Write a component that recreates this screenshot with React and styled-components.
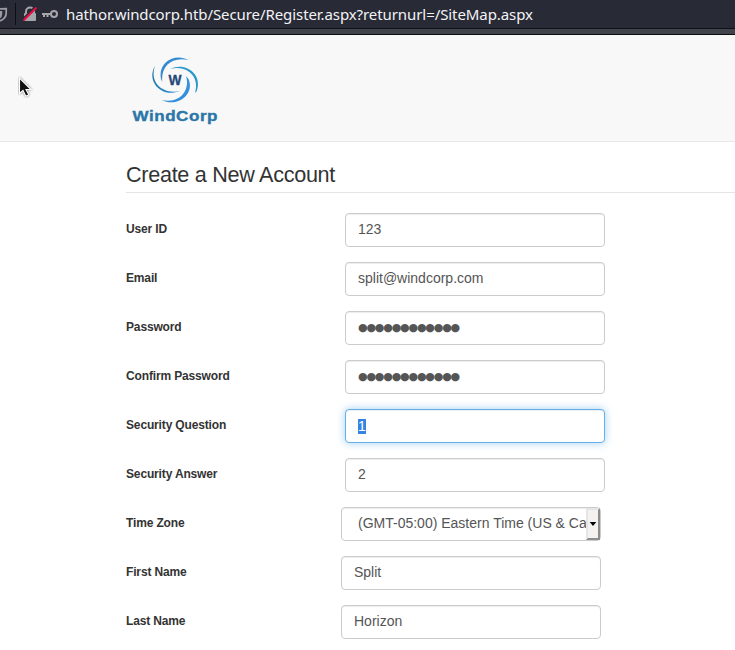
import React from "react";
import styled, { createGlobalStyle, css } from "styled-components";

const GlobalStyle = createGlobalStyle`
  *, *::before, *::after { box-sizing: border-box; }
  body {
    margin: 0;
    background: #fff;
    color: #333;
    font-family: "Liberation Sans", Arial, sans-serif;
    overflow: hidden;
  }
`;

const Page = styled.div`
  position: relative;
  width: 735px;
  height: 650px;
  overflow: hidden;
`;

const AddressBar = styled.div`
  display: flex;
  align-items: flex-start;
  height: 29px;
  background: #282a36;
  border-bottom: 1px solid #101116;
`;

const BarIcons = styled.svg`
  display: block;
  flex: none;
  width: 66px;
  height: 28px;
`;

const Url = styled.span`
  font: 15px/28px "Noto Sans", sans-serif;
  color: #f3f3f5;
  letter-spacing: -0.083px;
  white-space: nowrap;
`;

const Toolbar = styled.div`
  height: 6px;
  background: #42444d;
  border-bottom: 1px solid #0d0d10;
`;

const Header = styled.header`
  height: 107px;
  padding: 20px 0 0 131px;
  background: #f8f8f8;
  border-bottom: 1px solid #e7e7e7;
`;

const Brand = styled.svg`
  display: block;
  width: 90px;
  height: 74px;
`;

const Cursor = styled.svg`
  position: absolute;
  left: 18px;
  top: 76px;
  width: 16px;
  height: 23px;
`;

const CursorArrow = styled.path`
  fill: #111;
  stroke: #fff;
  stroke-width: 1.1;
  filter: drop-shadow(0 0 1px #777);
`;

const Main = styled.main`
  padding-left: 126px;
`;

const Title = styled.h1`
  margin: 0 0 20px;
  height: 51px;
  padding-top: 20px;
  border-bottom: 1px solid #e5e5e5;
  font-size: 21.6px;
  letter-spacing: -0.29px;
  line-height: 25px;
  font-weight: 400;
  white-space: nowrap;
`;

const Row = styled.div`
  display: flex;
  height: 34px;
  margin-bottom: 15px;
`;

const Label = styled.div`
  flex: none;
  width: ${(p) => (p.$narrow ? 215 : 219)}px;
  padding-top: 8px;
  font-size: 12px;
  letter-spacing: -0.15px;
  line-height: 16px;
  font-weight: 700;
`;

const Field = styled.div`
  display: flex;
  width: 260px;
  height: 34px;
  padding: 5px 12px;
  border: 1px solid #ccc;
  border-radius: 4px;
  background: #fff;
  color: #555;
  font-size: 14px;
  line-height: 20px;
  white-space: nowrap;
  box-shadow: inset 0 1px 1px rgba(0, 0, 0, 0.075);
  ${(p) => p.$focused && css`
    border-color: #66afe9;
    box-shadow: inset 0 1px 1px rgba(0, 0, 0, 0.075), 0 0 8px rgba(102, 175, 233, 0.6);
  `}
`;

const SelectField = styled(Field)`
  padding: 0;
`;

const SelectValue = styled.div`
  flex: 1;
  min-width: 0;
  padding: 5px 0 5px 16px;
`;

const SelectArrow = styled.div`
  display: flex;
  align-items: center;
  justify-content: center;
  flex: none;
  width: 14px;
  height: 32px;
  background: #f3f2f1;
  border: 2px solid;
  border-color: #e5e5e5 #8d8d8d #8d8d8d #e5e5e5;
`;

const Dots = styled.span`
  font: 11px/22px "DejaVu Sans", sans-serif;
  letter-spacing: -1.18px;
`;

const Selected = styled.span`
  height: 15px;
  margin-top: 4px;
  line-height: 14px;
  color: #fff;
  background: #3584e4;
`;

const fields = [
  { label: "User ID", value: "123" },
  { label: "Email", value: "split@windcorp.com" },
  { label: "Password", value: "●●●●●●●●●●●●", kind: "password" },
  { label: "Confirm Password", value: "●●●●●●●●●●●●", kind: "password" },
  { label: "Security Question", value: "1", kind: "selected" },
  { label: "Security Answer", value: "2" },
  { label: "Time Zone", value: "(GMT-05:00) Eastern Time (US & Ca", kind: "select", narrow: true },
  { label: "First Name", value: "Split", narrow: true },
  { label: "Last Name", value: "Horizon", narrow: true },
];

function Control({ kind, value }) {
  if (kind === "select") {
    return (
      <SelectField>
        <SelectValue>{value}</SelectValue>
        <SelectArrow>
          <svg width="8" height="4" viewBox="0 0 8 4"><path d="M.7 0h6.6L4 4z" fill="#000" /></svg>
        </SelectArrow>
      </SelectField>
    );
  }
  if (kind === "password") return <Field><Dots>{value}</Dots></Field>;
  if (kind === "selected") return <Field $focused><Selected>{value}</Selected></Field>;
  return <Field>{value}</Field>;
}

function Logo() {
  return (
    <Brand viewBox="131 55 90 74">
      <defs>
        <linearGradient id="swirl" x1="0" y1="0" x2="1" y2="0">
          <stop offset="0" stopColor="#237baa" />
          <stop offset="1" stopColor="#3694de" />
        </linearGradient>
      </defs>
      <path fill="#348ad1" d="M188.500 60C175 52.500 157.500 62 161 79L162.300 82C160.500 67 171 56 188.500 60Z" />
      <path fill="#2998cb" d="M170.300 69C185 61.500 203 74 196.800 91L195 93C200 78 188 64.500 170.300 69Z" />
      <path fill="#3690db" d="M162 100C175 107 193 97 189.500 82Q188.500 78 186 76C190.500 90 180 104 162 100Z" />
      <path fill="url(#swirl)" d="M155 66C146 81 161 98.500 180 91C164 94.500 149 84 155 66Z" />
      <text x="175" y="84.500" textAnchor="middle" textLength="13" lengthAdjust="spacingAndGlyphs" fontFamily="Liberation Sans, sans-serif" fontSize="14" fontWeight="700" fill="#254779" stroke="#254779" strokeWidth=".3">W</text>
      <text x="132.500" y="121" textLength="85.500" lengthAdjust="spacingAndGlyphs" fontFamily="Liberation Sans, sans-serif" fontSize="15.500" letterSpacing=".5" fontWeight="700" fill="#2b76a9" stroke="#2b76a9" strokeWidth=".4">WindCorp</text>
    </Brand>
  );
}

export default function App() {
  return (
    <Page>
      <GlobalStyle />
      <AddressBar>
        <BarIcons viewBox="0 0 66 28">
          <path d="M-6 8.700Q0 9 6.200 8.700V13C6.200 17.500 3.500 19.500 0 21" fill="none" stroke="#999aa2" strokeWidth="1.800" />
          <path d="M0 11h2.200v3q0 3-2.200 4.500z" fill="#999aa2" />
          <path d="M15.500 3v22" stroke="#0e0f14" />
          <path d="M26 14v-2.500a4 4 0 0 1 8 0V14" fill="none" stroke="#a5a6ac" strokeWidth="2" />
          <rect x="24" y="13" width="12" height="8" rx="1" fill="#a5a6ac" />
          <path d="M22.500 19.500L35.500 6.500" stroke="#282a36" strokeWidth="1.800" />
          <path d="M23.500 20.500L36.500 7.500" stroke="#ed0b43" strokeWidth="1.900" />
          <circle cx="54" cy="14" r="3" fill="none" stroke="#a5a6ac" strokeWidth="2" />
          <path d="M42 14h9M44 14v3M47.500 14v3" fill="none" stroke="#a5a6ac" strokeWidth="2" />
        </BarIcons>
        <Url>hathor.windcorp.htb/Secure/Register.aspx?returnurl=/SiteMap.aspx</Url>
      </AddressBar>
      <Toolbar />
      <Header><Logo /></Header>
      <Main>
        <Title>Create a New Account</Title>
        {fields.map((f) => (
          <Row key={f.label}>
            <Label $narrow={f.narrow}>{f.label}</Label>
            <Control kind={f.kind} value={f.value} />
          </Row>
        ))}
      </Main>
      <Cursor viewBox="18 76 16 23">
        <CursorArrow d="M19.500 78v15.500l3.500-3 2.800 5.700 3-1.500-2.800-5.200h5z" />
      </Cursor>
    </Page>
  );
}
